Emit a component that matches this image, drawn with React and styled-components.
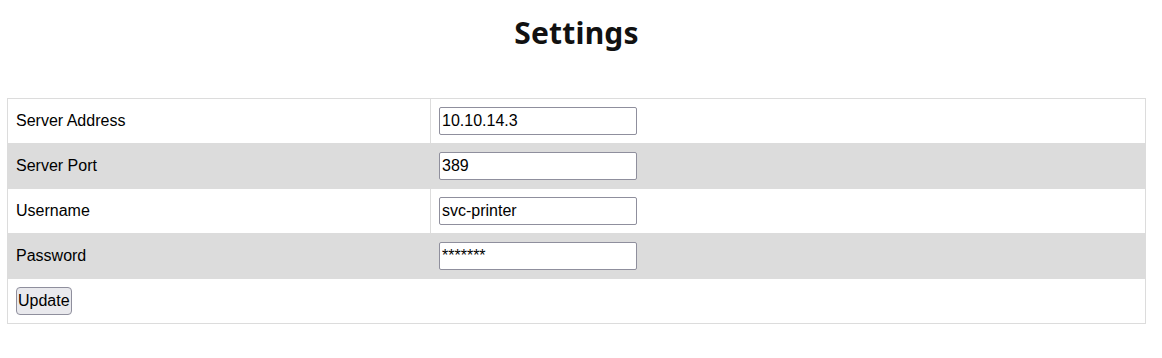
import React from 'react'
import styled, { createGlobalStyle } from 'styled-components'

const GlobalStyle = createGlobalStyle`
    body {
        margin: 0;
        background: #fff;
        font-family: "Liberation Sans", Arial, sans-serif;
        color: #000;
    }
`

const fields = [
    { label: 'Server Address', value: '10.10.14.3' },
    { label: 'Server Port', value: '389' },
    { label: 'Username', value: 'svc-printer' },
    { label: 'Password', value: '*******' },
]

function App() {
    return (
        <Page>
            <GlobalStyle />
            <Title>Settings</Title>
            <Form onSubmit={(e) => e.preventDefault()}>
                {fields.map((field, i) => (
                    <Row key={field.label} shaded={i % 2 === 1}>
                        <Label>{field.label}</Label>
                        <Cell>
                            <Input type="text" defaultValue={field.value} />
                        </Cell>
                    </Row>
                ))}
                <ButtonRow>
                    <Button type="submit">Update</Button>
                </ButtonRow>
            </Form>
        </Page>
    )
}

export default App

const Page = styled.div`
    width: 1139px;
    margin: 0 7px;
    padding-top: 14px;
`

const Title = styled.h1`
    margin: 0 0 47px;
    height: 37px;
    line-height: 37px;
    text-align: center;
    font-family: "Noto Sans", sans-serif;
    font-size: 30px;
    font-weight: 700;
    letter-spacing: 0.2px;
    color: #111;
`

const Form = styled.form`
    border: 1px solid #dcdcdc;
    border-top: none;
    display: flex;
    flex-direction: column;
`

const Row = styled.div`
    display: grid;
    grid-template-columns: 423px 1fr;
    height: 44px;
    border-top: 1px solid #dcdcdc;
    background: ${(p) => (p.shaded ? '#dcdcdc' : '#fff')};
`

const Label = styled.div`
    display: flex;
    align-items: center;
    padding-left: 8px;
    font-size: 16px;
    border-right: 1px solid #dcdcdc;
`

const Cell = styled.div`
    display: flex;
    align-items: center;
    padding-left: 8px;
`

const Input = styled.input`
    box-sizing: border-box;
    width: 198px;
    height: 28px;
    padding: 0 2px;
    border: 1px solid #8f8f9d;
    border-radius: 2px;
    background: #fff;
    font-family: "Liberation Sans", Arial, sans-serif;
    font-size: 16px;
    color: #000;
`

const ButtonRow = styled.div`
    height: 44px;
    display: flex;
    align-items: center;
    padding-left: 8px;
    border-top: 1px solid #dcdcdc;
`

const Button = styled.button`
    box-sizing: border-box;
    height: 28px;
    padding: 0 1px;
    border: 1px solid #8f8f9d;
    border-radius: 4px;
    background: #e9e9ed;
    font-family: "Liberation Sans", Arial, sans-serif;
    font-size: 16px;
    color: #000;
`
